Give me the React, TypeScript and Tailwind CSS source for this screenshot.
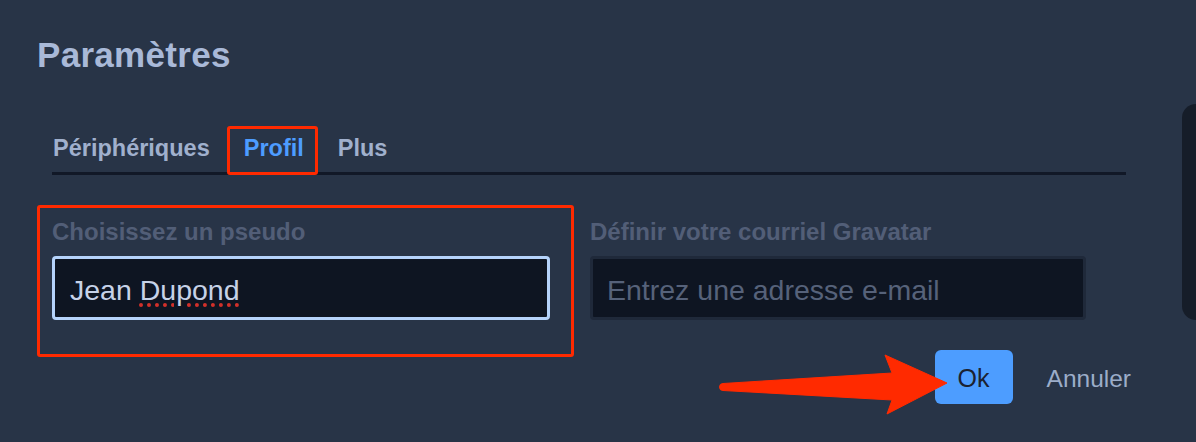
export default function App() {
  const tabs = ["Périphériques", "Profil", "Plus"];

  return (
    <div
      id="settings"
      className="relative w-[1196px] h-[442px] overflow-hidden bg-[#283447] font-['Liberation_Sans',Arial,sans-serif]"
    >
      {/* Title */}
      <h1 className="pl-[37px] pt-[35px] text-[35px] leading-10 font-bold tracking-[0.3px] text-[#a9b9d8]">
        Paramètres
      </h1>

      {/* Tabs */}
      <div className="mt-[59px] ml-[52px] w-[1074px] flex gap-[34px] pl-px border-b-[3px] border-[#111827]">
        {tabs.map((t) => (
          <div
            key={t}
            className={
              t === "Profil"
                ? "relative pb-[10px] text-[23.5px] leading-7 font-bold text-[#4d9cff]"
                : "relative pb-[10px] text-[23.5px] leading-7 font-bold text-[#a0b0cd]"
            }
          >
            {t}
            {t === "Profil" && (
              <span className="absolute -left-[17px] -right-[14px] -top-[8px] -bottom-[3px] border-[3px] border-[#ff2a00] rounded-[3px]" />
            )}
          </div>
        ))}
      </div>

      {/* Fields */}
      <div className="mt-[43px] ml-[52px] flex gap-[40px]">
        <div className="relative w-[498px]">
          <label className="block text-[24px] leading-7 font-bold text-[#525e77]">
            Choisissez un pseudo
          </label>
          <div className="mt-[10px] h-[64px] flex items-center pl-[15px] pt-[4px] border-[3px] border-[#b5d3fb] rounded-[4px] bg-[#0e1522] text-[28.5px] text-[#c6d2e8]">
            <span className="whitespace-pre">Jean </span>
            <span className="underline decoration-dotted decoration-[#d1302a] decoration-[4px] underline-offset-[4px]">
              Dupond
            </span>
          </div>
          <span className="absolute -left-[15px] -right-[24px] -top-[13px] -bottom-[37px] border-[3px] border-[#ff2a00] rounded-[3px]" />
        </div>

        <div className="w-[496px]">
          <label className="block text-[24px] leading-7 font-bold text-[#525e77]">
            Définir votre courriel Gravatar
          </label>
          <input
            type="email"
            placeholder="Entrez une adresse e-mail"
            className="mt-[10px] w-full h-[64px] pl-[14px] pt-[4px] border-[3px] border-[#1f293a] rounded-[4px] bg-[#0e1522] text-[28.5px] text-[#c6d2e8] placeholder:text-[#56627a] outline-none"
          />
        </div>
      </div>

      {/* Actions */}
      <div className="mt-[30px] pr-[65px] flex justify-end items-center gap-[34px]">
        <button className="w-[78px] h-[54px] pt-[4px] rounded-[6px] bg-[#4d9dff] text-[25px] text-[#1b2231]">
          Ok
        </button>
        <button className="pt-[4px] text-[24.5px] text-[#9cadc9]">Annuler</button>
      </div>

      {/* Scrollbar */}
      <div className="absolute right-0 top-[104px] w-[14px] h-[216px] rounded-l-full bg-[#161d29]" />

      {/* Arrow annotation */}
      <svg
        className="absolute inset-0 pointer-events-none"
        width="1196"
        height="442"
        viewBox="0 0 1196 442"
      >
        <path
          d="M723 383.5 L892 373 L885 355 L947 383 L887 414 L892 400 L723 390.5 A3.5 3.5 0 0 1 723 383.5 Z"
          fill="#ff2a00"
          stroke="#ff2a00"
          strokeWidth="1"
          strokeLinejoin="round"
        />
      </svg>
    </div>
  );
}
